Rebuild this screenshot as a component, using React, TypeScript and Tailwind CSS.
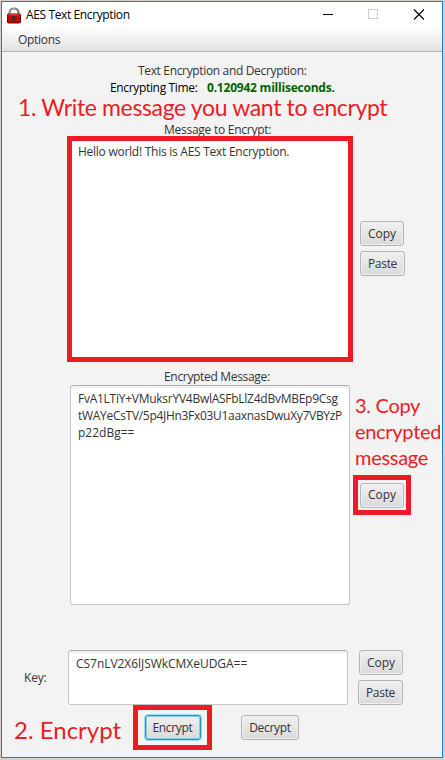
import type { ReactNode } from 'react';

function Button({ children, className = '', focused = false }: { children: ReactNode; className?: string; focused?: boolean }) {
  const edge = focused
    ? 'border-[#159bcb] shadow-[0_0_0_1px_#a5dcef,inset_0_0_0_1px_#83cee6]'
    : 'border-[#b4b4b4] shadow-[inset_0_0_0_1px_#efefef]';
  return (
    <button className={`flex h-[25px] shrink-0 items-center justify-center whitespace-nowrap rounded-[3px] border bg-linear-to-b from-[#f0f0f0] to-[#dadada] pb-px text-[12px] ${edge} ${className}`}>
      {children}
    </button>
  );
}

function Padlock() {
  return (
    <svg width="14" height="17" viewBox="0 0 14 17" className="shrink-0">
      <path d="M2.5 8V5.5a4.5 4 0 0 1 9 0V8" fill="none" stroke="#777b7e" strokeWidth="2.2" />
      <path d="M2.5 7V5.3a4.5 4 0 0 1 6-3.4" fill="none" stroke="#b9bdc0" strokeWidth=".8" />
      <rect x=".5" y="7" width="13" height="9" rx="1" fill="#ce0808" stroke="#820000" />
      <path d="M1.5 7.8h11" stroke="#f04a40" />
      <path d="M1 14.5h12" stroke="#9b0000" />
      <rect x="5" y="9" width="4" height="5" fill="#5c3030" />
      <circle cx="7" cy="10.5" r="1" fill="#292929" />
      <path d="M7 10.5v3" stroke="#292929" />
    </svg>
  );
}

export default function App() {
  return (
    <main className="h-[760px] w-[445px] overflow-hidden bg-[#d0d0d0] pl-px pt-px font-['Open_Sans','Noto_Sans',sans-serif] text-[12px] leading-[17px] text-[#333]">
      <div className="relative flex h-[757px] w-[442px] flex-col border border-[#1b7fcc] bg-[#f3f3f3]">
        <header className="flex h-[26px] shrink-0 items-center bg-white pl-[5px] text-black">
          <Padlock />
          <span className="-mt-[2px] ml-[5px] w-[250px] whitespace-nowrap tracking-[-0.38px]">AES Text Encryption</span>
          <svg width="104" height="12" viewBox="0 0 104 12" className="-mt-[2px] ml-[47px] shrink-0" shapeRendering="crispEdges">
            <path d="M0 6.5h10" stroke="#000" />
            <rect x="45.5" y="1.5" width="9" height="9" fill="none" stroke="#ccc" />
            <path d="M91 1.5l10 10M101 1.5l-10 10" stroke="#000" shapeRendering="auto" strokeWidth="1.1" />
          </svg>
        </header>
        <nav className="flex h-[24px] shrink-0 items-center border-b border-[#b5b5b5] bg-linear-to-b from-[#fdfdfd] to-[#e2e2e2] pl-[16px]">
          <span className="tracking-[-0.3px]">Options</span>
        </nav>

        <section className="flex h-[84px] shrink-0 flex-col whitespace-nowrap pt-[10px]">
          <h1 className="ml-[136px] tracking-[-0.34px]">Text Encryption and Decryption:</h1>
          <div className="flex text-black">
            <span className="ml-[108px] w-[97px] tracking-[-0.34px]">Encrypting Time:</span>
            <strong className="font-bold tracking-[-0.22px] text-[#006400]">0.120942 milliseconds.</strong>
          </div>
          <p className="ml-[16px] h-[25px] font-['Lato',sans-serif] text-[23px] leading-[22px] tracking-[-0.36px] text-[#ed1c24]">1. Write message you want to encrypt</p>
          <h2 className="ml-[162px] h-[15px] leading-[17px] tracking-[-0.26px]">Message to Encrypt:</h2>
        </section>

        <section className="flex h-[226px] shrink-0 pl-[65px]">
          <div className="w-[286px] whitespace-nowrap border-[5px] border-[#ed1c24] bg-white pl-[6px] pt-[2px] tracking-[-0.26px]">Hello world! This is AES Text Encryption.</div>
          <div className="ml-[7px] flex flex-col gap-[5px] pt-[85px]">
            <Button className="w-[44px]">Copy</Button>
            <Button className="w-[45px] tracking-[-0.3px]">Paste</Button>
          </div>
        </section>

        <h2 className="ml-[162px] flex h-[23px] shrink-0 items-end whitespace-nowrap tracking-[-0.32px]">Encrypted Message:</h2>

        <section className="flex h-[220px] shrink-0 pl-[68px]">
          <div className="w-[280px] shrink-0 whitespace-nowrap rounded-[3px] border border-[#c6c6c6] border-t-[#b0b0b0] bg-white pl-[7px] pt-[4px] shadow-[inset_0_2px_2px_#eeeeee]">
            <p className="tracking-[-0.26px]">FvA1LTiY+VMuksrYV4BwlASFbLlZ4dBvMBEp9Csg</p>
            <p className="tracking-[-0.3px]">tWAYeCsTV/5p4JHn3Fx03U1aaxnasDwuXy7VBYzP</p>
            <p>p22dBg==</p>
          </div>
          <div className="ml-[3px] w-[87px] shrink-0 pt-[7px]">
            <div className="ml-[2px] h-[83px] whitespace-nowrap font-['Lato',sans-serif] text-[20px] leading-[26px] tracking-[-0.3px] text-[#ed1c24]">
              <p>3. Copy</p>
              <p>encrypted</p>
              <p>message</p>
            </div>
            <div className="flex h-[40px] w-[58px] items-center justify-center border-[5px] border-[#ed1c24]">
              <Button className="w-[44px]">Copy</Button>
            </div>
          </div>
        </section>

        <section className="mt-[45px] flex h-[55px] shrink-0">
          <div className="flex w-[66px] items-center pl-[22px] tracking-[-0.21px]">Key:</div>
          <div className="w-[280px] whitespace-nowrap rounded-[3px] border border-[#c6c6c6] border-t-[#b0b0b0] bg-white pl-[7px] pt-[4px] tracking-[-0.04px] shadow-[inset_0_2px_2px_#eeeeee]">CS7nLV2X6lJSWkCMXeUDGA==</div>
          <div className="ml-[10px] flex flex-col items-end gap-[5px]">
            <Button className="w-[44px]">Copy</Button>
            <Button className="w-[45px] tracking-[-0.3px]">Paste</Button>
          </div>
        </section>

        <section className="flex h-[45px] shrink-0 items-center">
          <p className="w-[131px] whitespace-nowrap pl-[12px] pt-[4px] font-['Lato',sans-serif] text-[24px] leading-[30px] text-[#ed1c24]">2. Encrypt</p>
          <div className="flex h-[45px] w-[79px] items-center justify-center border-[5px] border-[#ed1c24]">
            <Button focused className="w-[56px] tracking-[-0.3px]">Encrypt</Button>
          </div>
          <Button className="ml-[29px] w-[58px] tracking-[-0.3px]">Decrypt</Button>
        </section>
        <div className="absolute right-px top-[362px] h-[86px] w-px bg-white" />
      </div>
    </main>
  );
}
